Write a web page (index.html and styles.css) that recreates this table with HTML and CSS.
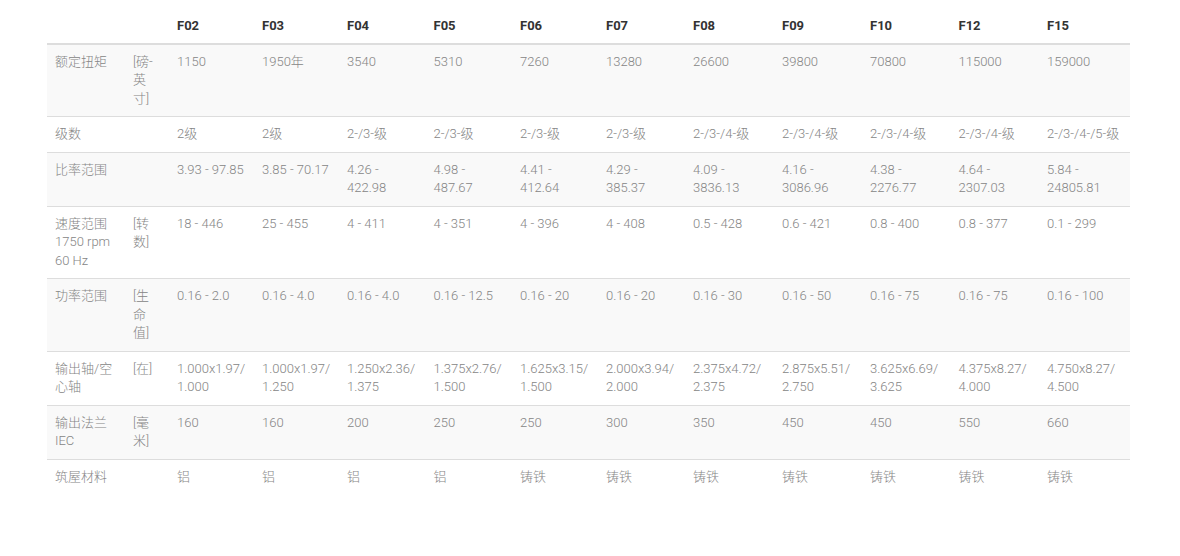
FILE: index.html
```html
<!DOCTYPE html>
<html lang="zh">
<head>
<meta charset="utf-8">
<link rel="stylesheet" href="styles.css">
</head>
<body>
<div class="wrap">
<table class="spec">
<colgroup>
<col class="c-label"><col class="c-unit">
<col class="c1"><col class="c2"><col class="c3"><col class="c4"><col class="c5"><col class="c6"><col class="c7"><col class="c8"><col class="c9"><col class="c10"><col class="c11">
</colgroup>
<thead>
<tr><th></th><th></th><th>F02</th><th>F03</th><th>F04</th><th>F05</th><th>F06</th><th>F07</th><th>F08</th><th>F09</th><th>F10</th><th>F12</th><th>F15</th></tr>
</thead>
<tbody>
<tr><td>额定扭矩</td><td>[磅-英寸]</td><td>1150</td><td>1950年</td><td>3540</td><td>5310</td><td>7260</td><td>13280</td><td>26600</td><td>39800</td><td>70800</td><td>115000</td><td>159000</td></tr>
<tr><td>级数</td><td></td><td>2级</td><td>2级</td><td>2-/3-级</td><td>2-/3-级</td><td>2-/3-级</td><td>2-/3-级</td><td>2-/3-/4-级</td><td>2-/3-/4-级</td><td>2-/3-/4-级</td><td>2-/3-/4-级</td><td>2-/3-/4-/5-级</td></tr>
<tr><td>比率范围</td><td></td><td>3.93 - 97.85</td><td>3.85 - 70.17</td><td>4.26 - 422.98</td><td>4.98 - 487.67</td><td>4.41 - 412.64</td><td>4.29 - 385.37</td><td>4.09 - 3836.13</td><td>4.16 - 3086.96</td><td>4.38 - 2276.77</td><td>4.64 - 2307.03</td><td>5.84 - 24805.81</td></tr>
<tr><td>速度范围 1750 rpm 60 Hz</td><td>[转数]</td><td>18 - 446</td><td>25 - 455</td><td>4 - 411</td><td>4 - 351</td><td>4 - 396</td><td>4 - 408</td><td>0.5 - 428</td><td>0.6 - 421</td><td>0.8 - 400</td><td>0.8 - 377</td><td>0.1 - 299</td></tr>
<tr><td>功率范围</td><td>[生命值]</td><td>0.16 - 2.0</td><td>0.16 - 4.0</td><td>0.16 - 4.0</td><td>0.16 - 12.5</td><td>0.16 - 20</td><td>0.16 - 20</td><td>0.16 - 30</td><td>0.16 - 50</td><td>0.16 - 75</td><td>0.16 - 75</td><td>0.16 - 100</td></tr>
<tr><td>输出轴/空心轴</td><td>[在]</td><td>1.000x1.97/<wbr>1.000</td><td>1.000x1.97/<wbr>1.250</td><td>1.250x2.36/<wbr>1.375</td><td>1.375x2.76/<wbr>1.500</td><td>1.625x3.15/<wbr>1.500</td><td>2.000x3.94/<wbr>2.000</td><td>2.375x4.72/<wbr>2.375</td><td>2.875x5.51/<wbr>2.750</td><td>3.625x6.69/<wbr>3.625</td><td>4.375x8.27/<wbr>4.000</td><td>4.750x8.27/<wbr>4.500</td></tr>
<tr><td>输出法兰 IEC</td><td>[毫米]</td><td>160</td><td>160</td><td>200</td><td>250</td><td>250</td><td>300</td><td>350</td><td>450</td><td>450</td><td>550</td><td>660</td></tr>
<tr><td>筑屋材料</td><td></td><td>铝</td><td>铝</td><td>铝</td><td>铝</td><td>铸铁</td><td>铸铁</td><td>铸铁</td><td>铸铁</td><td>铸铁</td><td>铸铁</td><td>铸铁</td></tr>
</tbody>
</table>
</div>
</body>
</html>
```

FILE: styles.css
```css
html, body {
  margin: 0;
  padding: 0;
  background: #fff;
}
.wrap {
  padding: 8px 0 0 47px;
}
.spec {
  table-layout: fixed;
  width: 1082.5px;
  border-collapse: collapse;
  border-spacing: 0;
  font-family: Roboto, "Noto Sans CJK SC", sans-serif;
  font-size: 13px;
  line-height: 18.5px;
  color: #858585;
  font-weight: 300;
}
.c-label { width: 78px; }
.c-unit { width: 44px; }
.c1 { width: 85px; }
.c2 { width: 85px; }
.c3 { width: 86.5px; }
.c4 { width: 86.5px; }
.c5 { width: 86px; }
.c6 { width: 87px; }
.c7 { width: 89px; }
.c8 { width: 88px; }
.c9 { width: 88.5px; }
.c10 { width: 88.5px; }
.c11 { width: 90.5px; }
.spec th {
  text-align: left;
  font-weight: 700;
  color: #333;
  padding: 9px 8px 7px;
  vertical-align: bottom;
  border-bottom: 2px solid #ddd;
}
.spec td {
  padding: 8px;
  vertical-align: top;
  border-top: 1px solid #ddd;
  word-wrap: break-word;
}
.spec tbody tr:first-child td {
  border-top: 0;
}
.spec tbody tr:nth-child(odd) td {
  background: #f9f9f9;
}
```
